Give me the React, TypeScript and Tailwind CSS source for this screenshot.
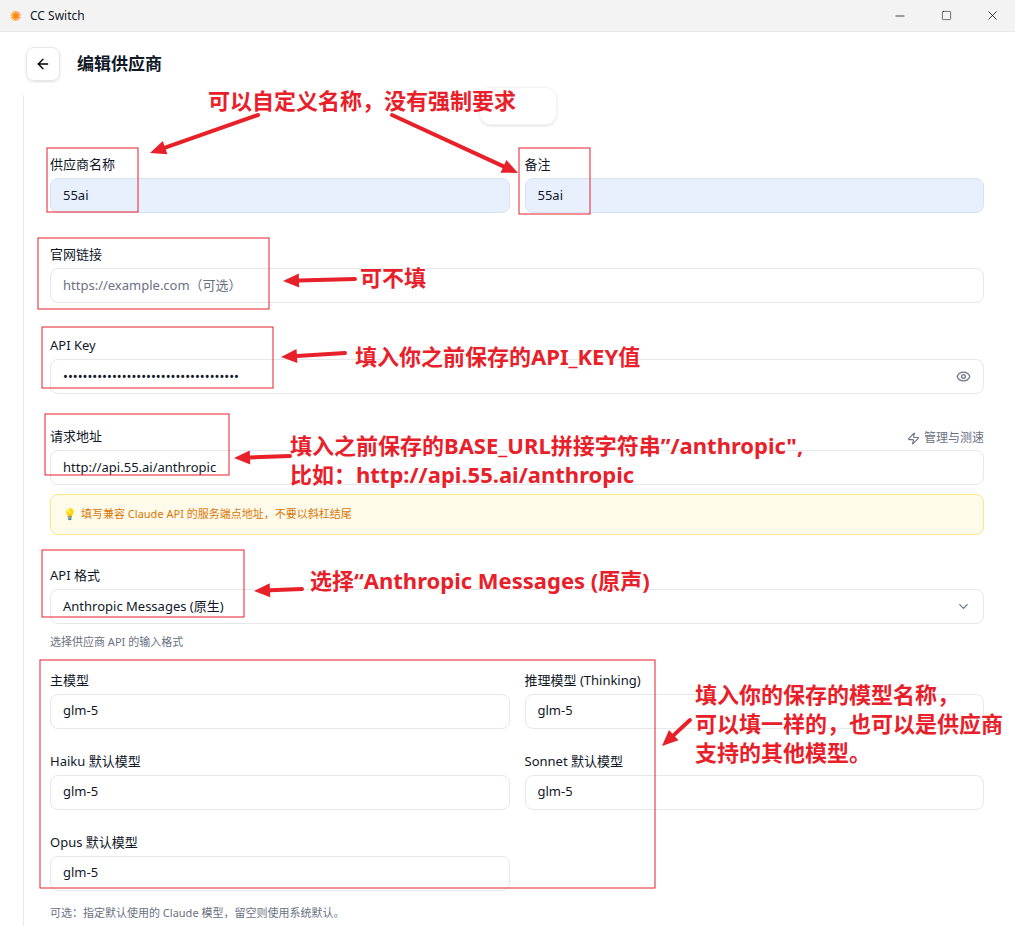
import React from "react";
import { ArrowLeft, Eye, ChevronDown, Zap, Minus, Square, X } from "lucide-react";

const font = { fontFamily: '"Noto Sans", "Noto Sans CJK SC", sans-serif' };

function Field({ label, value, placeholder, hi, className = "", children }: { label: string; value?: string; placeholder?: string; hi?: boolean; className?: string; children?: React.ReactNode }) {
    return (
        <div className={"flex flex-col " + className}>
            <div className="h-[16px] text-[13px] text-gray-900 leading-[14px] mb-[5px]">{label}</div>
            <div className={"relative h-[35px] rounded-lg border flex items-center px-3 text-[13px] " + (hi ? "bg-[#e8f0fe] border-[#d6e2f5]" : "bg-white border-gray-200")}>
                {value ? <span className="text-gray-900">{value}</span> : <span className="text-gray-500">{placeholder}</span>}
                {children}
            </div>
        </div>
    );
}

const red = "#e8202a";

function Box({ x, y, w, h }: { x: number; y: number; w: number; h: number }) {
    return <rect x={x} y={y} width={w} height={h} fill="none" stroke={red} strokeWidth={1} />;
}

function Arrow({ x1, y1, x2, y2 }: { x1: number; y1: number; x2: number; y2: number }) {
    const a = Math.atan2(y2 - y1, x2 - x1);
    const L = 16, W = 7;
    const bx = x2 - L * Math.cos(a), by = y2 - L * Math.sin(a);
    const p1 = `${bx + W * Math.sin(a)},${by - W * Math.cos(a)}`;
    const p2 = `${bx - W * Math.sin(a)},${by + W * Math.cos(a)}`;
    return (
        <g>
            <line x1={x1} y1={y1} x2={bx} y2={by} stroke={red} strokeWidth={4} strokeLinecap="round" />
            <polygon points={`${x2},${y2} ${p1} ${p2}`} fill={red} />
        </g>
    );
}

function Note({ x, y, children }: { x: number; y: number; children: React.ReactNode }) {
    return (
        <div className="absolute text-[22px] font-bold leading-[29px] text-[#e8202a] whitespace-nowrap" style={{ left: x, top: y, textShadow: "0 0 2px #fff, 0 0 2px #fff" }}>
            {children}
        </div>
    );
}

export default function App() {
    return (
        <div className="relative w-[1015px] h-[926px] overflow-hidden bg-white" style={font}>
            {/* title bar */}
            <div className="h-[32px] bg-[#f3f3f3] flex items-center justify-between pl-[10px] border-b border-gray-200">
                <div className="flex items-center gap-2 text-[12px] text-gray-900">
                    <span className="text-[14px] text-orange-400">✺</span>CC Switch
                </div>
                <div className="flex items-center">
                    <div className="w-[46px] flex justify-center"><Minus size={14} strokeWidth={1.2} /></div>
                    <div className="w-[46px] flex justify-center"><Square size={11} strokeWidth={1.2} /></div>
                    <div className="w-[46px] flex justify-center"><X size={15} strokeWidth={1.2} /></div>
                </div>
            </div>

            {/* header */}
            <div className="h-[63px] flex items-center px-[26px] gap-[17px]">
                <button className="w-[34px] h-[34px] rounded-lg border border-gray-200 flex items-center justify-center shadow-sm">
                    <ArrowLeft size={16} />
                </button>
                <h1 className="text-[17px] font-bold text-gray-900">编辑供应商</h1>
            </div>

            {/* content */}
            <div className="ml-[23px] border-l border-gray-200 h-[831px] relative">
                <div className="absolute left-[455px] -top-[8px] w-[78px] h-[38px] rounded-xl border border-gray-100 shadow-sm" />
                <div className="pl-[26px] pr-[31px] pt-[62px] flex flex-col">
                    <div className="flex gap-[15px]">
                        <Field className="flex-1" label="供应商名称" value="55ai" hi />
                        <Field className="flex-1" label="备注" value="55ai" hi />
                    </div>
                    <Field className="mt-[34px]" label="官网链接" placeholder="https://example.com（可选）" />
                    <Field className="mt-[35px]" label="API Key" value="••••••••••••••••••••••••••••••••••••">
                        <Eye size={15} className="absolute right-3 text-gray-500" />
                    </Field>
                    <div className="mt-[35px] relative">
                        <div className="absolute right-0 top-0 flex items-center gap-1 text-[12px] text-gray-500">
                            <Zap size={13} />管理与测速
                        </div>
                        <Field label="请求地址" value="http://api.55.ai/anthropic" />
                    </div>
                    <div className="mt-[9px] h-[41px] rounded-lg border border-[#fce58a] bg-[#fffbeb] flex items-center px-3 text-[11px] text-[#d97706] gap-1">
                        <span>💡</span>填写兼容 Claude API 的服务端点地址，不要以斜杠结尾
                    </div>
                    <Field className="mt-[33px]" label="API 格式" value="Anthropic Messages (原生)">
                        <ChevronDown size={15} className="absolute right-3 text-gray-500" />
                    </Field>
                    <div className="mt-[10px] text-[11px] text-gray-500">选择供应商 API 的输入格式</div>
                    <div className="mt-[22px] grid grid-cols-2 gap-x-[15px] gap-y-[25px]">
                        <Field label="主模型" value="glm-5" />
                        <Field label="推理模型 (Thinking)" value="glm-5" />
                        <Field label="Haiku 默认模型" value="glm-5" />
                        <Field label="Sonnet 默认模型" value="glm-5" />
                        <Field label="Opus 默认模型" value="glm-5" />
                    </div>
                    <div className="mt-[14px] text-[11px] text-gray-500">可选：指定默认使用的 Claude 模型，留空则使用系统默认。</div>
                </div>
            </div>

            {/* annotations */}
            <svg className="absolute inset-0 pointer-events-none" width={1015} height={926}>
                <Box x={47} y={148} w={91} h={64} />
                <Box x={519} y={148} w={71} h={66} />
                <Box x={38} y={238} w={231} h={71} />
                <Box x={42} y={327} w={231} h={61} />
                <Box x={45} y={414} w={184} h={61} />
                <Box x={42} y={550} w={202} h={67} />
                <Box x={40} y={660} w={615} h={228} />
                <Arrow x1={258} y1={115} x2={150} y2={153} />
                <Arrow x1={392} y1={115} x2={518} y2={173} />
                <Arrow x1={355} y1={279} x2={283} y2={281} />
                <Arrow x1={345} y1={353} x2={281} y2={357} />
                <Arrow x1={290} y1={456} x2={234} y2={458} />
                <Arrow x1={302} y1={589} x2={254} y2={591} />
                <Arrow x1={690} y1={720} x2={662} y2={746} />
            </svg>
            <Note x={208} y={86}>可以自定义名称，没有强制要求</Note>
            <Note x={360} y={263}>可不填</Note>
            <Note x={355} y={342}>填入你之前保存的API_KEY值</Note>
            <Note x={290} y={431}>填入之前保存的BASE_URL拼接字符串”/anthropic",<br />比如：http://api.55.ai/anthropic</Note>
            <Note x={310} y={566}>选择“Anthropic Messages (原声)</Note>
            <Note x={695} y={680}>填入你的保存的模型名称，<br />可以填一样的，也可以是供应商<br />支持的其他模型。</Note>
        </div>
    );
}
